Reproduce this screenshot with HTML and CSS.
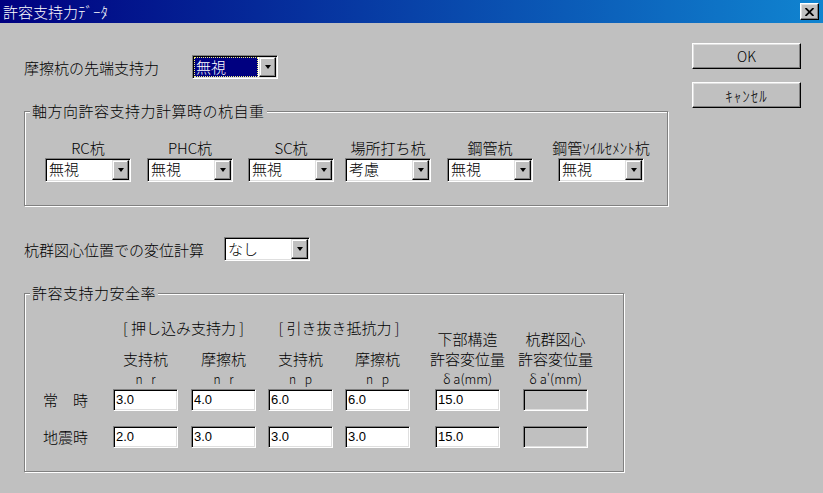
FILE: index.html
```html
<!DOCTYPE html>
<html lang="ja">
<head>
    <meta charset="UTF-8">
    <title>許容支持力ﾃﾞｰﾀ</title>
    <link rel="stylesheet" href="styles.css">
</head>
<body>
    <div class="dialog">
        <div class="titlebar">
            <span class="title">許容支持力ﾃﾞｰﾀ</span>
            <span class="close-btn">
                <svg width="9" height="8" viewBox="0 0 9 8"><path d="M0.5 0 L8.5 8 M8.5 0 L0.5 8" stroke="#000" stroke-width="1.8"/></svg>
            </span>
        </div>

        <div class="client">
            <div class="main">
                <div class="field-row first-row">
                    <span class="label">摩擦杭の先端支持力</span>
                    <div class="combo focused">
                        <span class="combo-value">無視</span>
                        <span class="combo-btn"></span>
                    </div>
                </div>

                <div class="group weight-group">
                    <span class="group-title">軸方向許容支持力計算時の杭自重</span>
                    <div class="pile-grid">
                        <div class="pile-col">
                            <span>RC杭</span>
                            <div class="combo"><span class="combo-value">無視</span><span class="combo-btn"></span></div>
                        </div>
                        <div class="pile-col">
                            <span>PHC杭</span>
                            <div class="combo"><span class="combo-value">無視</span><span class="combo-btn"></span></div>
                        </div>
                        <div class="pile-col">
                            <span>SC杭</span>
                            <div class="combo"><span class="combo-value">無視</span><span class="combo-btn"></span></div>
                        </div>
                        <div class="pile-col">
                            <span>場所打ち杭</span>
                            <div class="combo"><span class="combo-value">考慮</span><span class="combo-btn"></span></div>
                        </div>
                        <div class="pile-col">
                            <span>鋼管杭</span>
                            <div class="combo"><span class="combo-value">無視</span><span class="combo-btn"></span></div>
                        </div>
                        <div class="pile-col">
                            <span>鋼管ｿｲﾙｾﾒﾝﾄ杭</span>
                            <div class="combo"><span class="combo-value">無視</span><span class="combo-btn"></span></div>
                        </div>
                    </div>
                </div>

                <div class="field-row disp-row">
                    <span class="label">杭群図心位置での変位計算</span>
                    <div class="combo">
                        <span class="combo-value">なし</span>
                        <span class="combo-btn"></span>
                    </div>
                </div>

                <div class="group safety-group">
                    <span class="group-title">許容支持力安全率</span>
                    <div class="safety-grid">
                        <div class="bracket b-push">[ 押し込み支持力 ]</div>
                        <div class="bracket b-pull">[ 引き抜き抵抗力 ]</div>
                        <div class="hd3">
                            <span>下部構造</span>
                            <span>許容変位量</span>
                            <span class="unit-text">δ a(mm)</span>
                        </div>
                        <div class="hd3">
                            <span>杭群図心</span>
                            <span>許容変位量</span>
                            <span class="unit-text">δ a'(mm)</span>
                        </div>

                        <div class="hd first">支持杭</div>
                        <div class="hd">摩擦杭</div>
                        <div class="hd">支持杭</div>
                        <div class="hd">摩擦杭</div>

                        <div class="unit first">n r</div>
                        <div class="unit">n r</div>
                        <div class="unit">n p</div>
                        <div class="unit">n p</div>

                        <div class="row-label">常　時</div>
                        <div class="edit">3.0</div>
                        <div class="edit">4.0</div>
                        <div class="edit">6.0</div>
                        <div class="edit">6.0</div>
                        <div class="edit">15.0</div>
                        <div class="edit disabled"></div>

                        <div class="row-label">地震時</div>
                        <div class="edit">2.0</div>
                        <div class="edit">3.0</div>
                        <div class="edit">3.0</div>
                        <div class="edit">3.0</div>
                        <div class="edit">15.0</div>
                        <div class="edit disabled"></div>
                    </div>
                </div>
            </div>

            <div class="buttons">
                <div class="btn">OK</div>
                <div class="btn btn-jp">ｷｬﾝｾﾙ</div>
            </div>
        </div>
    </div>
</body>
</html>
```

FILE: styles.css
```css
body {
    margin: 0;
    padding: 0;
    background-color: #c0c0c0;
    font-family: "Noto Sans CJK JP", "Liberation Sans", sans-serif;
    font-size: 15px;
    font-weight: 300;
    color: #000;
}

.dialog {
    width: 823px;
    height: 493px;
    background-color: #c0c0c0;
    overflow: hidden;
}

/* title bar */
.titlebar {
    height: 23px;
    display: flex;
    align-items: center;
    justify-content: space-between;
    padding: 0 4px 0 3px;
    background: linear-gradient(to right, #000080, #1084d0);
    color: #fff;
}

.title {
    font-size: 15px;
    line-height: 23px;
}

.close-btn {
    width: 19px;
    height: 17px;
    box-sizing: border-box;
    display: flex;
    align-items: center;
    justify-content: center;
    background-color: #c0c0c0;
    border: 1px solid;
    border-color: #fff #000 #000 #fff;
    box-shadow: inset -1px -1px #808080, inset 1px 1px #dfdfdf;
}

/* client area */
.client {
    display: flex;
    padding-left: 24px;
}

.main {
    width: 644px;
}

.buttons {
    margin-left: 24px;
    margin-top: 20px;
    display: flex;
    flex-direction: column;
    gap: 13px;
}

.btn {
    width: 109px;
    height: 26px;
    box-sizing: border-box;
    display: flex;
    align-items: center;
    justify-content: center;
    font-size: 14px;
    border: 1px solid;
    border-color: #fff #000 #000 #fff;
    box-shadow: inset -1px -1px #808080, inset 1px 1px #dfdfdf;
}

.btn-jp {
    font-size: 15px;
    letter-spacing: 1px;
}

.field-row {
    display: flex;
    align-items: center;
    height: 24px;
}

.label {
    white-space: nowrap;
}

.first-row {
    margin-top: 32px;
}

.first-row .label {
    width: 168px;
}

.disp-row {
    margin-top: 31px;
}

.disp-row .label {
    width: 200px;
}

/* combo box */
.combo {
    width: 86px;
    height: 24px;
    box-sizing: border-box;
    display: flex;
    padding: 1px;
    background-color: #fff;
    border: 1px solid;
    border-color: #808080 #fff #fff #808080;
    box-shadow: inset 1px 1px #000, inset -1px -1px #dfdfdf;
}

.combo-value {
    flex: 1;
    padding-left: 2px;
    line-height: 20px;
    white-space: nowrap;
}

.combo.focused .combo-value {
    margin-right: 1px;
    background-color: #000080;
    color: #fff;
    outline: 1px dotted #f0f080;
    outline-offset: -1px;
}

.combo-btn {
    width: 17px;
    box-sizing: border-box;
    display: flex;
    align-items: center;
    justify-content: center;
    background-color: #c0c0c0;
    border: 1px solid;
    border-color: #dfdfdf #000 #000 #dfdfdf;
    box-shadow: inset -1px -1px #808080, inset 1px 1px #fff;
}

.combo-btn::after {
    content: "";
    border-style: solid;
    border-width: 4px 3.5px 0;
    border-color: #000 transparent transparent;
}

/* group boxes */
.group {
    border: 1px solid #808080;
    box-shadow: inset 1px 1px #fff, 1px 1px #fff;
}

.group-title {
    display: table;
    margin: -10px 0 0 5px;
    padding: 0 2px;
    line-height: 18px;
    letter-spacing: 0.5px;
    background-color: #c0c0c0;
}

.weight-group {
    margin-top: 32px;
    padding-bottom: 23px;
}

.pile-grid {
    margin-top: 19px;
    padding-left: 20px;
    display: grid;
    grid-template-columns: 102px 101px 97px 102px 111px 87px;
}

.pile-col {
    width: 86px;
    display: flex;
    flex-direction: column;
    align-items: center;
}

.pile-col span {
    line-height: 18px;
    white-space: nowrap;
}

.pile-col .combo {
    margin-top: 1px;
}

.safety-group {
    width: 600px;
    box-sizing: border-box;
    margin-top: 32px;
    padding-bottom: 23px;
}

.safety-grid {
    margin-top: 16px;
    display: grid;
    grid-template-columns: 88px 78px 77px 77px 90px 88px 66px;
    grid-template-rows: 31px 20px 20px 37px 22px;
}

.bracket {
    grid-column-end: span 2;
    line-height: 20px;
    text-align: center;
    white-space: nowrap;
}

.b-push {
    grid-column-start: 2;
    padding-right: 14px;
}

.b-pull {
    padding-right: 25px;
}

.hd3 {
    grid-row-end: span 3;
    width: 65px;
    align-self: end;
    display: flex;
    flex-direction: column;
    align-items: center;
}

.hd3 span {
    line-height: 20px;
    white-space: nowrap;
}

.unit-text {
    font-size: 13px;
}

.hd,
.unit {
    width: 65px;
    line-height: 20px;
    text-align: center;
    white-space: nowrap;
}

.hd.first,
.unit.first {
    grid-column-start: 2;
}

.unit {
    font-size: 12px;
    letter-spacing: 3px;
    text-indent: 3px;
}

.row-label {
    padding-left: 18px;
    line-height: 22px;
    white-space: nowrap;
}

.edit {
    width: 65px;
    height: 22px;
    box-sizing: border-box;
    padding: 1px 1px 1px 2px;
    font-family: "Liberation Sans", sans-serif;
    font-size: 13px;
    line-height: 18px;
    background-color: #fff;
    border: 1px solid;
    border-color: #808080 #fff #fff #808080;
    box-shadow: inset 1px 1px #000, inset -1px -1px #dfdfdf;
}

.edit.disabled {
    background-color: #c0c0c0;
}
```
